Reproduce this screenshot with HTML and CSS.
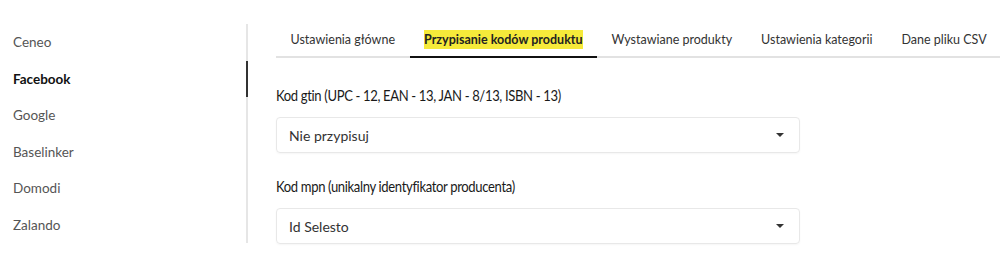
FILE: index.html
```html
<!DOCTYPE html>
<html lang="pl">
<head>
<meta charset="utf-8">
<link rel="stylesheet" href="styles.css">
</head>
<body>
<div class="page">
  <nav class="sidebar">
    <div class="side-item">Ceneo</div>
    <div class="side-item active">Facebook</div>
    <div class="side-item">Google</div>
    <div class="side-item">Baselinker</div>
    <div class="side-item">Domodi</div>
    <div class="side-item">Zalando</div>
  </nav>
  <main class="main">
    <div class="tabs">
      <div class="tab">Ustawienia główne</div>
      <div class="tab active"><span class="hl">Przypisanie kodów produktu</span></div>
      <div class="tab">Wystawiane produkty</div>
      <div class="tab">Ustawienia kategorii</div>
      <div class="tab">Dane pliku CSV</div>
    </div>
    <div class="form">
      <div class="field">
        <div class="label">Kod gtin (UPC - 12, EAN - 13, JAN - 8/13, ISBN - 13)</div>
        <div class="select"><span>Nie przypisuj</span><span class="caret"></span></div>
      </div>
      <div class="field">
        <div class="label">Kod mpn (unikalny identyfikator producenta)</div>
        <div class="select"><span>Id Selesto</span><span class="caret"></span></div>
      </div>
    </div>
  </main>
</div>
</body>
</html>
```
FILE: styles.css
```css
html, body {
  margin: 0;
  padding: 0;
  background: #fff;
}
body {
  font-family: Lato, "Open Sans", sans-serif;
  color: #222;
  width: 1000px;
  height: 279px;
  overflow: hidden;
}
.page {
  display: flex;
  align-items: flex-start;
}
.sidebar {
  width: 246px;
  flex-shrink: 0;
  margin-top: 24px;
  border-right: 2px solid #e6e6e6;
  display: flex;
  flex-direction: column;
}
.side-item {
  height: 36.5px;
  line-height: 36.5px;
  padding-left: 13px;
  font-size: 13.5px;
  color: #555;
  margin-right: -2px;
  border-right: 2px solid transparent;
}
.side-item.active {
  color: #111;
  font-weight: 700;
  border-right-color: #333;
}
.main {
  flex: 1;
  min-width: 0;
  margin-left: 28px;
}
.tabs {
  display: flex;
  margin-top: 23px;
  border-bottom: 2px solid #e2e2e2;
  white-space: nowrap;
}
.tab {
  flex-shrink: 0;
  height: 33px;
  line-height: 33px;
  padding: 0 14.5px;
  font-size: 12.5px;
  color: #333;
  margin-bottom: -2px;
  border-bottom: 2px solid transparent;
}
.tab.active {
  border-bottom-color: #111;
  font-weight: 700;
  color: #222;
}
.hl {
  background: #f6ea3a;
  padding: 2px 0;
}
.form {
  padding-top: 27px;
}
.field + .field {
  margin-top: 23px;
}
.label {
  font-size: 15px;
  line-height: 20px;
  color: #1a1a1a;
  letter-spacing: -0.4px;
  transform: scaleX(0.87);
  transform-origin: left center;
  white-space: nowrap;
  margin-bottom: 12px;
}
.select {
  width: 524px;
  height: 36px;
  box-sizing: border-box;
  border: 1px solid #e8e8e8;
  border-radius: 4px;
  box-shadow: 0 1px 2px rgba(0,0,0,0.04);
  display: flex;
  align-items: center;
  justify-content: space-between;
  padding: 0 15px 0 12px;
  font-size: 14px;
  color: #333;
}
.caret {
  width: 0;
  height: 0;
  border-left: 4px solid transparent;
  border-right: 4px solid transparent;
  border-top: 4px solid #333;
}
```
